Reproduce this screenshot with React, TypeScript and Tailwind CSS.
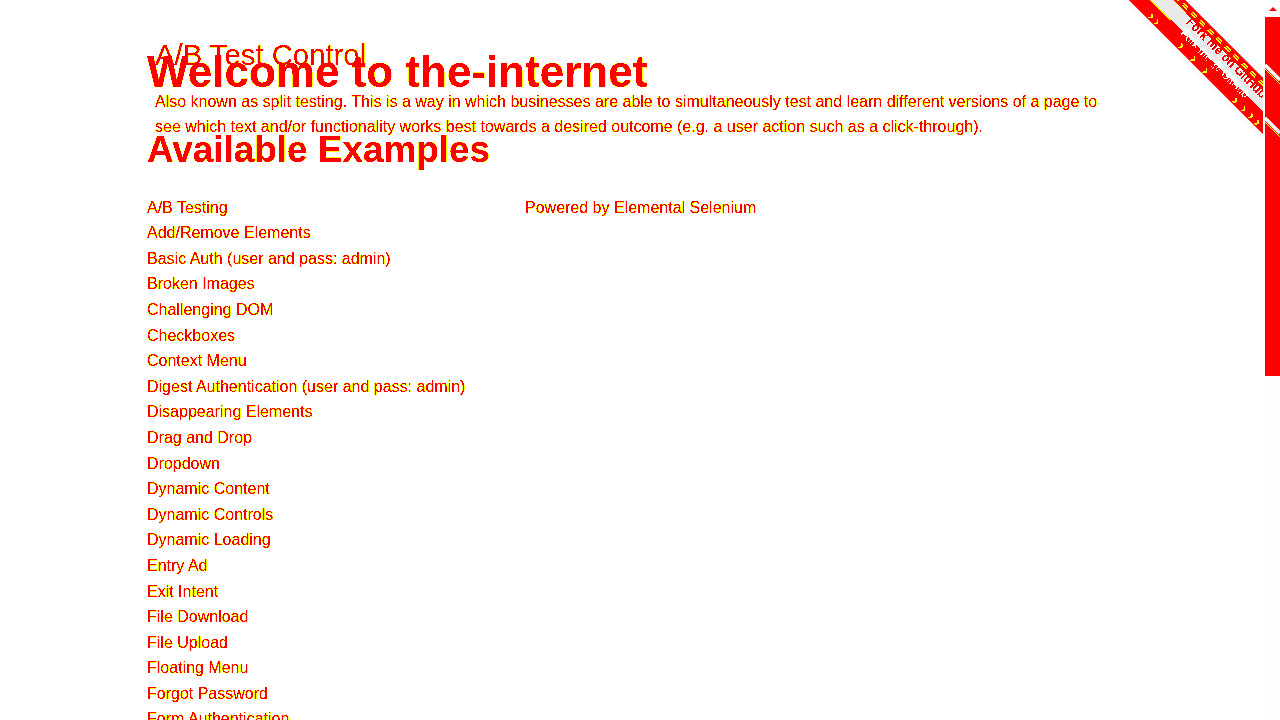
import React from "react";

const links = [
  "A/B Testing",
  "Add/Remove Elements",
  "Basic Auth (user and pass: admin)",
  "Broken Images",
  "Challenging DOM",
  "Checkboxes",
  "Context Menu",
  "Digest Authentication (user and pass: admin)",
  "Disappearing Elements",
  "Drag and Drop",
  "Dropdown",
  "Dynamic Content",
  "Dynamic Controls",
  "Dynamic Loading",
  "Entry Ad",
  "Exit Intent",
  "File Download",
  "File Upload",
  "Floating Menu",
  "Forgot Password",
  "Form Authentication",
];

// hard-edged red/yellow text look of the screenshot
const Filters = () => (
  <svg className="absolute h-0 w-0" aria-hidden="true">
    <filter id="hard" colorInterpolationFilters="sRGB" x="0" y="0" width="100%" height="100%">
      <feComponentTransfer>
        <feFuncG type="discrete" tableValues="0 0 0 0 0 0 0 0 1 1 1 1 1 1 1 1" />
        <feFuncB type="discrete" tableValues="0 0 0 0 0 0 0 0 0 0 0 0 0 0 1 1" />
      </feComponentTransfer>
    </filter>
    <filter id="hard-gray" colorInterpolationFilters="sRGB" x="0" y="0" width="100%" height="100%">
      <feComponentTransfer>
        <feFuncG type="discrete" tableValues="0 0 0 0 0 0 0 0 1 1 1 1 1 1 0.914 1" />
        <feFuncB type="discrete" tableValues="0 0 0 0 0 0 0 0 1 1 1 1 1 1 0.914 1" />
      </feComponentTransfer>
    </filter>
  </svg>
);

const App = () => {
  return (
    <div className="relative flex h-screen overflow-hidden bg-white font-['Liberation_Sans',Arial,sans-serif] text-[#f00]">
      <Filters />
      <main className="flex-1 bg-white pl-[147px] pt-[38px] [filter:url(#hard)]">
        {/* top block */}
        <h3 className="ml-2 text-[29.3px] leading-[33px]">A/B Test Control</h3>
        <h1 className="mt-[-24px] text-[44px] font-bold leading-[50px]">Welcome to the-internet</h1>
        <div className="ml-2 mt-[-8.4px] w-[950px] text-base leading-[25.6px]">
          Also known as split testing. This is a way in which businesses are able to simultaneously test and learn
          different versions of a page to see which text and/or functionality works best towards a desired outcome
          (e.g. a user action such as a click-through).
        </div>
        <h2 className="mt-[-12px] text-[36.9px] font-bold leading-[44px]">Available Examples</h2>
        {/* list */}
        <div className="mt-[22.8px] flex">
          <ul className="w-[378px] shrink-0 text-base leading-[25.6px]">
            {links.map((l) => (
              <li key={l}>{l}</li>
            ))}
          </ul>
          <p className="text-base leading-[25.6px]">Powered by Elemental Selenium</p>
        </div>
      </main>

      {/* scrollbar */}
      <div className="relative flex w-[15px] shrink-0 flex-col bg-[#fdfdfd]">
        <div className="flex h-[17px] items-center justify-center">
          <div className="h-0 w-0 border-x-[4px] border-b-[4px] border-x-transparent border-b-[#f00]" />
        </div>
        <div className="h-[359px] bg-[#f00]" />
        {/* ribbon stripes crossing the thumb */}
        <svg className="absolute left-0 top-[60px] h-[85px] w-[15px]" viewBox="0 0 15 85">
          <path d="M0 5 L15 20" stroke="#fff" strokeWidth="3.5" />
          <path d="M0 9 L15 24" stroke="#ff0" strokeWidth="1" />
          <path d="M0 58 L15 73" stroke="#fff" strokeWidth="3.5" />
          <path d="M0 62 L15 77" stroke="#ff0" strokeWidth="1" />
        </svg>
      </div>

      {/* fork ribbon */}
      <div className="absolute right-[17px] top-0 h-[140px] w-[140px] overflow-hidden">
        <div className="absolute left-[-46px] top-[50px] h-10 w-[300px] rotate-45 shadow-[0_3px_6px_rgba(0,0,0,0.04)]">
          <div className="relative h-full overflow-hidden bg-[#f00] text-center font-bold [filter:url(#hard-gray)]">
            <div className="h-[9px]" />
            <div className="h-[15px] bg-[#e9e9e9]" />
            {/* stitching */}
            <svg className="absolute left-0 top-0 h-[40px] w-[300px]" viewBox="0 0 300 40" fill="none">
              <path d="M0 4.5 H300" stroke="#ff0" strokeWidth="3" strokeDasharray="7 5" />
              <path d="M0 4.5 H300" stroke="#f00" strokeWidth="1" />
              <path d="M40 8.5 H80 M200 8.5 H240 M40 24.5 H75 M205 24.5 H240" stroke="#ff0" strokeWidth="1" />
              <path
                d="M57 33 l3 3 l-3 3 M65 33 l3 3 l-3 3 M99 33 l3 3 l-3 3 M117 33 l3 3 l-3 3 M134 33 l3 3 l-3 3 M176 33 l3 3 l-3 3 M188 33 l3 3 l-3 3 M198 33 l3 3 l-3 3 M207 33 l3 3 l-3 3"
                stroke="#ff0"
                strokeWidth="1.5"
              />
            </svg>
            <div className="absolute left-[86px] top-[5px] w-[110px] text-[12px] leading-[14px] whitespace-nowrap [text-shadow:0_0_2px_#fff]">
              Fork me on GitHub
            </div>
            <div className="absolute left-[82px] top-[18px] w-[110px] text-[11px] font-normal leading-[13px] whitespace-nowrap text-white [text-shadow:0_0_2px_#f00]">
              Fork me @ GitHub
            </div>
          </div>
        </div>
      </div>
    </div>
  );
};

export default App;
